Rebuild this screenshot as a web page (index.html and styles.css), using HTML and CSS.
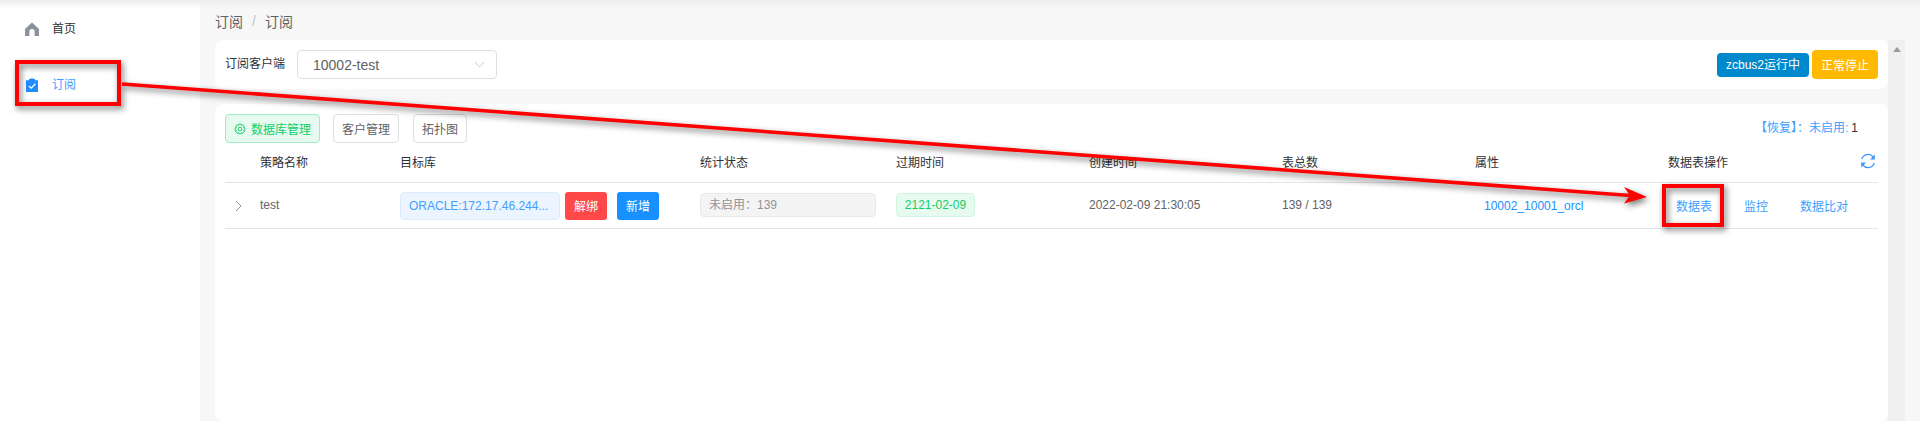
FILE: index.html
```html
<!DOCTYPE html>
<html lang="zh-CN">
<head>
<meta charset="utf-8">
<title>订阅</title>
<link rel="stylesheet" href="styles.css">
</head>
<body>
<div class="shell">
  <aside class="sidebar">
    <div class="nav-item">
      <svg class="nav-icon" viewBox="0 0 14 14"><path fill="#8a919f" d="M7 0.5 14 7v7H9.6V9.6a2.6 2.6 0 0 0-5.2 0V14H0V7z"/></svg>
      <span class="nav-text">首页</span>
    </div>
    <div class="nav-item nav-active">
      <svg class="nav-icon" viewBox="0 0 14 14"><path fill="#1f8cff" d="M4 1h1.2a2 1.2 0 0 1 3.6 0H10v1.200h3V14H1V2.200h3z"/><path fill="none" stroke="#fff" stroke-width="1.3" d="M3.800 8 6.200 10.200 10.400 5.800"/></svg>
      <span class="nav-text">订阅</span>
    </div>
  </aside>
  <main class="main">
    <div class="content">
      <nav class="crumbs"><span>订阅</span><span class="crumb-sep">/</span><span>订阅</span></nav>
      <section class="card card-top">
        <label class="field-label">订阅客户端</label>
        <div class="select">
          <span>10002-test</span>
          <svg class="chevron" viewBox="0 0 12 7"><path fill="none" stroke="#c0c4cc" stroke-width="1" d="M1 1l5 5 5-5"/></svg>
        </div>
        <div class="top-actions">
          <span class="badge-run">zcbus2运行中</span>
          <button class="btn-stop">正常停止</button>
        </div>
      </section>
      <section class="card card-main">
        <div class="toolbar">
          <button class="tab tab-active">
            <svg class="tab-icon" viewBox="0 0 16 16"><g fill="none" stroke="#13ce66" stroke-width="1.3"><circle cx="8" cy="8" r="2.400"/><path d="M6.600 1.500h2.800l.5 1.800 1.700-.9 2 2-.9 1.700 1.800.5v2.800l-1.800.5.9 1.700-2 2-1.700-.9-.5 1.800H6.600l-.5-1.800-1.700.9-2-2 .9-1.700-1.800-.5V6.600l1.800-.5-.9-1.700 2-2 1.700.9z"/></g></svg>
            数据库管理
          </button>
          <button class="tab tab-client">客户管理</button>
          <button class="tab tab-topo">拓扑图</button>
          <div class="restore"><span>【恢复】：</span><span class="restore-label">未启用:</span><span class="restore-count">1</span></div>
        </div>
        <div class="row row-head">
          <div></div>
          <div>策略名称</div>
          <div>目标库</div>
          <div>统计状态</div>
          <div>过期时间</div>
          <div>创建时间</div>
          <div>表总数</div>
          <div>属性</div>
          <div class="head-ops">
            <span>数据表操作</span>
            <svg class="refresh" viewBox="0 0 16 16"><g fill="none" stroke="#3a97ff" stroke-width="1.3"><path d="M1.800 6.200A6.400 6.400 0 0 1 13.200 4.200"/><path d="M14.200 9.800A6.400 6.400 0 0 1 2.800 11.800"/></g><path fill="#3a97ff" d="M14.800 1.600v4.800H10zM1.200 14.400V9.600H6z"/></svg>
          </div>
        </div>
        <div class="row row-body">
          <div class="expand"><svg viewBox="0 0 7 12"><path fill="none" stroke="#8d9299" stroke-width="1" d="M1 1l5 5-5 5"/></svg></div>
          <div class="cell-text">test</div>
          <div class="target">
            <span class="tag-db">ORACLE:172.17.46.244...</span>
            <button class="btn-small btn-red">解绑</button>
            <button class="btn-small btn-blue">新增</button>
          </div>
          <div class="cell-text"><span class="tag-off">未启用：139</span></div>
          <div class="cell-text"><span class="tag-date">2121-02-09</span></div>
          <div class="cell-text">2022-02-09 21:30:05</div>
          <div class="cell-text">139 / 139</div>
          <div class="prop-link">10002_10001_orcl</div>
          <div class="ops">
            <span class="op-table">数据表</span>
            <span class="op-monitor">监控</span>
            <span>数据比对</span>
          </div>
        </div>
      </section>
    </div>
    <div class="scrollbar">
      <svg class="scroll-arrow" viewBox="0 0 8 5"><path fill="#9a9a9a" d="M4 0l4 5H0z"/></svg>
    </div>
  </main>
</div>
<div class="top-shade"></div>
<svg class="annotations" viewBox="0 0 1920 421">
  <g class="anno-group">
    <rect x="17" y="62" width="102" height="42" fill="none" stroke="#ff0000" stroke-width="4"/>
    <rect x="1664" y="186" width="58" height="39" fill="none" stroke="#ff0000" stroke-width="4"/>
    <path d="M122 84 1630 195.500" stroke="#ff0000" stroke-width="3.600" fill="none"/>
    <path d="M1647 197 1624 187 1630 195.500 1624 203.500z" fill="#ff0000"/>
  </g>
</svg>
</body>
</html>
```
FILE: styles.css
```css
* { box-sizing: border-box; }
html, body { margin: 0; height: 100%; overflow: hidden; }
body {
  font-family: "Liberation Sans", "Noto Sans CJK SC", sans-serif;
  font-size: 12px;
  color: #606266;
  background: #f7f7f7;
  position: relative;
}
button { font-family: inherit; font-size: 12px; cursor: pointer; }
.shell { display: flex; height: 421px; }

.sidebar { width: 200px; flex: none; background: #fff; padding-top: 8px; }
.nav-item {
  display: flex;
  align-items: center;
  gap: 13px;
  height: 42px;
  margin-bottom: 14px;
  padding-left: 25px;
  color: #303133;
}
.nav-text { padding-bottom: 4px; }
.nav-active { color: #409eff; }
.nav-icon { width: 14px; height: 14px; flex: none; }

.main { flex: 1; display: flex; min-width: 0; }
.content { flex: 1; min-width: 0; padding-left: 15px; display: flex; flex-direction: column; }
.scrollbar { width: 17px; margin-top: 40px; margin-right: 15px; background: #f0f0f0; display: flex; justify-content: center; padding-top: 7px; align-items: flex-start; }
.scroll-arrow { width: 8px; height: 5px; }

.crumbs { height: 40px; display: flex; align-items: center; gap: 9px; font-size: 14px; color: #606266; padding-top: 2px; }
.crumb-sep { color: #c0c4cc; }

.card { background: #fff; border-radius: 8px; }
.card-top { height: 49px; display: flex; padding: 10px 10px 0; align-items: flex-start; }
.field-label { color: #303133; width: 72px; line-height: 29px; }
.select {
  width: 200px;
  height: 29px;
  border: 1px solid #dcdfe6;
  border-radius: 4px;
  display: flex;
  align-items: center;
  justify-content: space-between;
  padding: 0 11px 0 15px;
  font-size: 14px;
  color: #606266;
}
.chevron { width: 11px; height: 7px; }
.top-actions { margin-left: auto; display: flex; align-items: center; gap: 3px; height: 29px; }
.badge-run { background: #0088cc; color: #fff; width: 92px; height: 24px; line-height: 24px; text-align: center; border-radius: 4px; }
.btn-stop { background: #ffba00; color: #fff; border: 0; width: 66px; height: 29px; border-radius: 4px; padding: 0; }

.card-main { flex: 1; margin-top: 15px; padding: 10px; }
.toolbar { display: flex; align-items: flex-start; height: 29px; }
.tab { height: 29px; background: #fff; border: 1px solid #dcdfe6; border-radius: 4px; color: #606266; padding: 0; display: flex; align-items: center; justify-content: center; }
.tab-active { width: 95px; background: #e7faf0; border-color: #a1ebc2; color: #13ce66; gap: 5px; }
.tab-icon { width: 12px; height: 12px; }
.tab-client { width: 66px; margin-left: 13px; }
.tab-topo { width: 54px; margin-left: 14px; }
.restore { margin-left: auto; margin-right: 20px; color: #409eff; line-height: 29px; display: flex; }
.restore-count { margin-left: 3px; color: #303133; }

.row { display: grid; grid-template-columns: 35px 140px 300px 196px 193px 193px 193px 193px 210px; align-items: center; border-bottom: 1px solid #dfe6ec; }
.row-head { height: 40px; color: #303133; padding-bottom: 2px; }
.row-body { height: 46px; }
.cell-text { padding-bottom: 2px; }
.head-ops { display: flex; justify-content: space-between; padding-right: 2px; }
.refresh { width: 16px; height: 16px; }
.expand { display: flex; padding-left: 10px; }
.expand svg { width: 7px; height: 12px; }
.target { display: flex; align-items: center; }
.tag-db { width: 160px; height: 28px; line-height: 26px; padding-left: 8px; background: #ecf5ff; border: 1px solid #d9ecff; border-radius: 4px; color: #409eff; white-space: nowrap; overflow: hidden; }
.btn-small { width: 42px; height: 28px; border: 0; border-radius: 3px; color: #fff; padding: 0; }
.btn-red { background: #ff4949; margin-left: 5px; }
.btn-blue { background: #1890ff; margin-left: 10px; }
.tag-off { display: block; width: 176px; height: 24px; line-height: 22px; padding-left: 8px; background: #f4f4f5; border: 1px solid #e9e9eb; border-radius: 4px; color: #909399; }
.tag-date { display: block; width: 79px; height: 24px; line-height: 22px; text-align: center; background: #e7faf0; border: 1px solid #d0f5e0; border-radius: 4px; color: #13ce66; }
.prop-link { color: #1890ff; padding-left: 9px; }
.ops { display: flex; color: #409eff; padding-left: 8px; }
.op-table { margin-right: 32px; }
.op-monitor { margin-right: 32px; }

.top-shade { position: absolute; left: 0; right: 0; top: 0; height: 9px; background: linear-gradient(#ededed, rgba(240,240,240,0)); pointer-events: none; }
.annotations { position: absolute; left: 0; top: 0; width: 1920px; height: 421px; pointer-events: none; }
.anno-group { filter: drop-shadow(2px 3px 3px rgba(0,0,0,.55)); }
```
